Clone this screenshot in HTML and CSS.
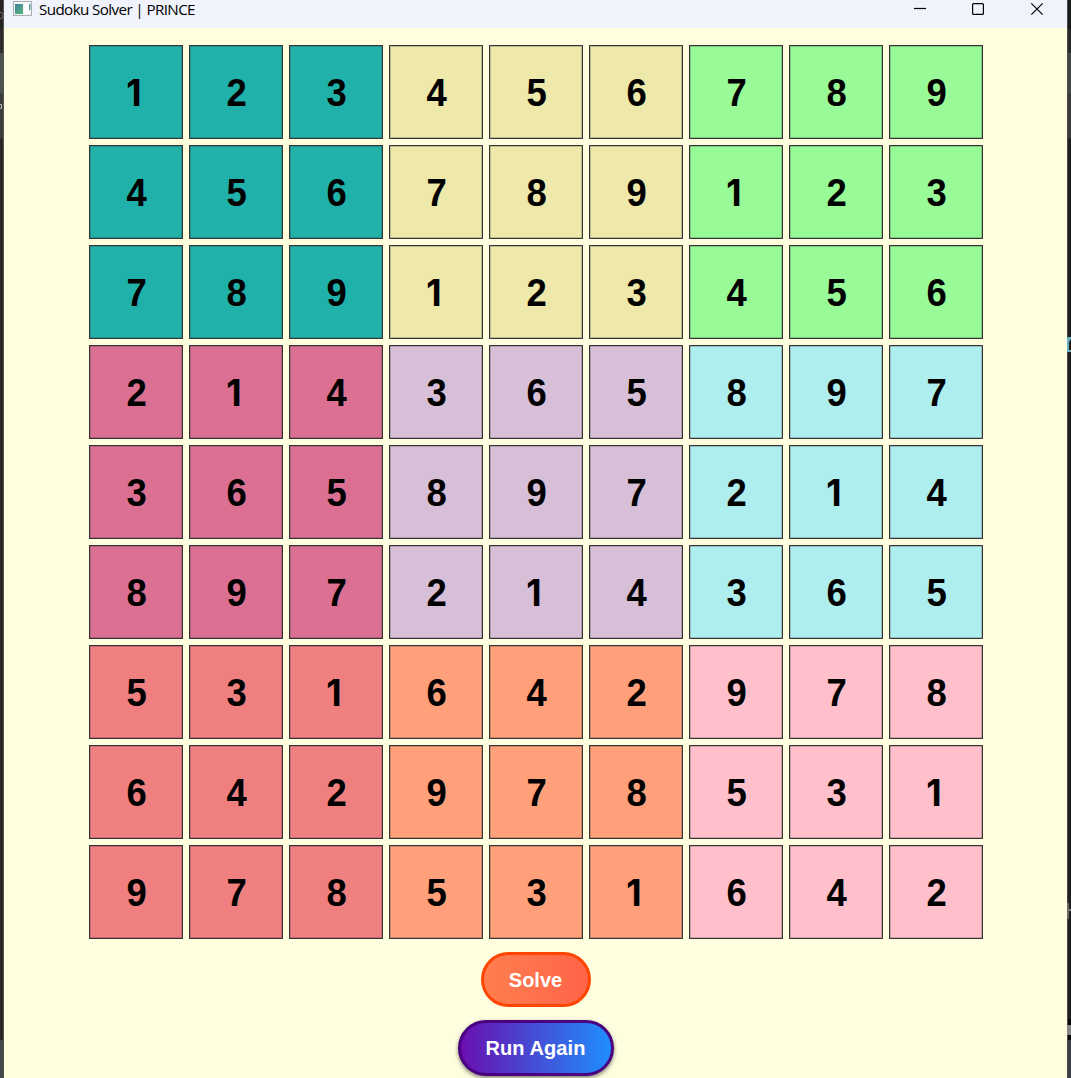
FILE: index.html
```html
<!DOCTYPE html>
<html lang="en">
<head>
<meta charset="utf-8">
<title>Sudoku Solver | PRINCE</title>
<link rel="stylesheet" href="styles.css">
</head>
<body>
<div class="desktop">
  <div class="edge edge-left"><svg width="4" height="1078" viewBox="0 0 4 1078"><path d="M0 12.500h1.500q1.500 1 1.500 3t-1.500 3H0" fill="none" stroke="#777"/><path d="M0 104.500h1.500v4H0" fill="none" stroke="#bbb"/></svg></div>
  <main class="window">
    <header class="titlebar">
      <svg class="app-icon" width="20" height="17" viewBox="0 0 20 17"><rect x=".5" y=".5" width="18" height="14" fill="#f4f6f6" stroke="#a9afb3"/><defs><linearGradient id="g" x2="1" y2="1"><stop stop-color="#437fa0"/><stop offset="1" stop-color="#55b779"/></linearGradient></defs><rect x="2" y="3" width="8" height="10" fill="url(#g)"/><path d="M11 3h5v10h-5z" fill="#fff"/><path d="M16 3h1.500v6H16z" fill="#4f9e98"/></svg>
      <span class="title">Sudoku Solver | PRINCE</span>
      <svg class="controls" width="130" height="20" viewBox="0 0 130 20" fill="none" stroke="#000" stroke-width="1.200"><path d="M0 8.500h12"/><rect x="58.600" y="3.600" width="10.800" height="10.800" rx="1"/><path d="M117.300 3.300l11.400 11.400M128.700 3.300l-11.400 11.400"/></svg>
    </header>
    <section class="board" id="board"></section>
    <div class="actions">
      <button class="btn solve">Solve</button>
      <button class="btn again">Run Again</button>
    </div>
  </main>
  <div class="edge edge-right"><svg width="4" height="1078" viewBox="0 0 4 1078"><path d="M0 337h4v15H0z" fill="#69aebf"/><path d="M2 350v-8l2-3v11z" fill="#1d1d1d"/><path d="M0 903h2v16H0z" fill="#6c6b62"/><path d="M2 909h2v2H2z" fill="#888"/><path d="M0 1025h4v10H0z" fill="#858585"/></svg></div>
</div>
<script src="board.js"></script>
</body>
</html>
```
FILE: styles.css
```css
* { box-sizing: border-box; }
body { margin: 0; overflow: hidden; }
.desktop { display: grid; grid-template-columns: 4px 1063px 4px; height: 1078px; }
.edge { overflow: hidden; }
.edge svg { display: block; }
.edge-left { border-right: 1px solid #55534a; background: linear-gradient(#262423 29px, #302c2b 29px 53px, #4b5352 53px 93px, #3c3c3c 93px 138px, #2a2725 139px 1040px, #444a4b 1040px); }
.edge-right { box-shadow: inset 1px 0 #484848; background: linear-gradient(#191b1a 29px, #292929 29px 53px, #424949 53px 93px, #3b3b3b 93px 138px, #1f1f1f 139px 1019px, #080808 1019px 1040px, #394144 1040px); }
.window { display: flex; flex-direction: column; align-items: center; background: #ffffe0; overflow: hidden; }
.titlebar { display: flex; align-items: flex-start; align-self: stretch; height: 28px; flex: none; padding: 0 23px 0 9px; background: #f0f3fb; }
.app-icon { margin-top: 1px; }
.title { margin: -1px auto 0 6px; font: 15.200px/20px "Open Sans", "Noto Sans", sans-serif; letter-spacing: -.61px; white-space: nowrap; color: #000; }
.board { display: grid; grid-template-columns: repeat(9, 94px); grid-auto-rows: 94px; gap: 6px; margin-top: 17px; }
.cell { display: flex; align-items: center; justify-content: center; padding: 2px 0 0 2px; border: 1px solid #333; box-shadow: inset 0 0 0 1px rgba(51, 51, 51, .25); font: bold 38px/42px "Liberation Sans", Arial, sans-serif; color: #000; }
.digit { display: block; transform: scaleX(.96); }
.one { margin-right: 5px; font-family: Inter, "Liberation Sans", sans-serif; font-size: 37px; }
.b0 { background: #20b2aa; }
.b1 { background: #eee8aa; }
.b2 { background: #98fb98; }
.b3 { background: #db7093; }
.b4 { background: #d8bfd8; }
.b5 { background: #afeeee; }
.b6 { background: #f08080; }
.b7 { background: #ffa07a; }
.b8 { background: #ffc0cb; }
.actions { display: flex; flex-direction: column; align-items: center; gap: 13px; margin-top: 13px; }
.btn { height: 55px; padding: 0; border: 3px solid; border-radius: 28px; background-origin: border-box; font: bold 20px/24px "Liberation Sans", Arial, sans-serif; color: #fff; }
.solve { width: 110px; border-color: #ff4500; background-image: linear-gradient(90deg, #ff7f50, #ff6347); }
.again { width: 156px; height: 56px; border-color: #4b0082; background-image: linear-gradient(90deg, #6a0dad, #1e90ff); box-shadow: 0 2px 4px rgba(0, 0, 0, .5); letter-spacing: .1px; }
```
FILE: board.js
```javascript
const rows = [
  '123456789', '456789123', '789123456',
  '214365897', '365897214', '897214365',
  '531642978', '642978531', '978531642'
];
const board = document.getElementById('board');
rows.forEach((row, r) => {
  [...row].forEach((value, c) => {
    const cell = document.createElement('div');
    cell.className = 'cell b' + (Math.floor(r / 3) * 3 + Math.floor(c / 3));
    const digit = document.createElement('span');
    digit.className = value === '1' ? 'digit one' : 'digit';
    digit.textContent = value;
    cell.append(digit);
    board.append(cell);
  });
});
```
